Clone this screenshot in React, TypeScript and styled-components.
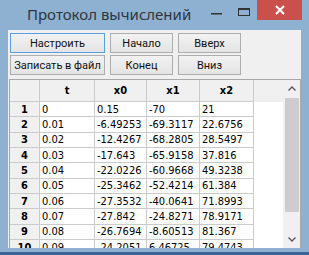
import React from "react";
import styled, { createGlobalStyle } from "styled-components";

const GlobalStyle = createGlobalStyle`
  html, body { margin: 0; padding: 0; }
  body { width: 309px; height: 255px; overflow: hidden; background: #8eb1d1; }
`;

const Window = styled.div`
  width: 309px;
  height: 255px;
  display: flex;
  flex-direction: column;
  background: #8eb1d1;
  overflow: hidden;
`;

const TitleBar = styled.div`
  height: 30px;
  flex: none;
  display: flex;
  align-items: flex-start;
`;

const Title = styled.div`
  padding: 4px 0 0 27px;
  font-family: "Noto Sans", "Open Sans", sans-serif;
  font-size: 15px;
  line-height: 20px;
  color: #2c3540;
  white-space: nowrap;
`;

const Controls = styled.div`
  margin-left: auto;
  margin-right: 7px;
  display: flex;
`;

const CaptionButton = styled.div<{ $w: number; $close?: boolean }>`
  width: ${(p) => p.$w}px;
  height: 20px;
  display: flex;
  align-items: center;
  justify-content: center;
  background: ${(p) => (p.$close ? "#c9504b" : "transparent")};
`;

const Client = styled.div`
  margin: 0 8px;
  flex: none;
  height: 218px;
  background: #f0f0f0;
  display: flex;
  flex-direction: column;
  padding: 3px 0 0 2px;
  box-sizing: border-box;
`;

const ButtonGrid = styled.div`
  display: grid;
  grid-template-columns: 95px 63px 63px;
  grid-auto-rows: 20px;
  column-gap: 5px;
  row-gap: 2px;
`;

const Button = styled.button<{ $focused?: boolean }>`
  box-sizing: border-box;
  margin: 0;
  padding: 0;
  border: 1px solid ${(p) => (p.$focused ? "#5b9fe2" : "#adadad")};
  background: linear-gradient(#f2f2f2, #e4e4e4);
  font-family: Roboto, "Noto Sans", sans-serif;
  font-size: 11px;
  color: #111;
  white-space: nowrap;
`;

const Grid = styled.div`
  margin: 4px 0 0 -1px;
  flex: 1;
  min-height: 0;
  border: 1px solid #a8a8a8;
  border-bottom: none;
  display: flex;
  background: #fff;
  overflow: hidden;
`;

const Cells = styled.div`
  flex: 1;
  display: flex;
  flex-direction: column;
`;

const COLS = "30px 55px 52px 53px 54px 1fr";

const HeaderRow = styled.div`
  display: grid;
  grid-template-columns: ${COLS};
  height: 22px;
  flex: none;
  background: #f0f0f0;
`;

const DataRow = styled.div`
  display: grid;
  grid-template-columns: ${COLS};
  height: 15.33px;
  flex: none;
`;

const Cell = styled.div<{ $fixed?: boolean; $filler?: boolean }>`
  box-sizing: border-box;
  border-right: ${(p) => (p.$filler ? "none" : "1px solid #cbcbcb")};
  border-bottom: ${(p) => (p.$filler ? "none" : "1px solid #cbcbcb")};
  background: ${(p) => (p.$fixed ? "#f0f0f0" : "transparent")};
  display: flex;
  align-items: center;
  justify-content: ${(p) => (p.$fixed ? "center" : "flex-start")};
  padding-left: ${(p) => (p.$fixed ? "0" : "2px")};
  font-family: "DejaVu Sans Condensed", "DejaVu Sans", sans-serif;
  font-stretch: condensed;
  font-size: 11px;
  font-weight: ${(p) => (p.$fixed ? "bold" : "normal")};
  color: #000;
  white-space: nowrap;
  overflow: hidden;
`;

const ScrollBar = styled.div`
  width: 17px;
  flex: none;
  background: #f0f0f0;
  display: flex;
  flex-direction: column;
  align-items: center;
`;

const ArrowBox = styled.div`
  width: 17px;
  height: 17px;
  flex: none;
  display: flex;
  align-items: center;
  justify-content: center;
`;

const Thumb = styled.div`
  margin-top: 1px;
  width: 14px;
  height: 114px;
  background: #cdcdcd;
`;

const Spacer = styled.div`
  flex: 1;
`;

const BottomStrip = styled.div`
  margin-top: 4px;
  flex: 1;
  background: #3b6592;
`;

const headers = ["t", "x0", "x1", "x2"];
const rows: string[][] = [
  ["0", "0.15", "-70", "21"],
  ["0.01", "-6.49253", "-69.3117", "22.6756"],
  ["0.02", "-12.4267", "-68.2805", "28.5497"],
  ["0.03", "-17.643", "-65.9158", "37.816"],
  ["0.04", "-22.0226", "-60.9668", "49.3238"],
  ["0.05", "-25.3462", "-52.4214", "61.384"],
  ["0.06", "-27.3532", "-40.0641", "71.8993"],
  ["0.07", "-27.842", "-24.8271", "78.9171"],
  ["0.08", "-26.7694", "-8.60513", "81.367"],
  ["0.09", "-24.2051", "6.46725", "79.4743"],
];

export default function App() {
  return (
    <>
      <GlobalStyle />
      <Window>
        <TitleBar>
          <Title>Протокол вычислений</Title>
          <Controls>
            <CaptionButton $w={27}>
              <svg width="11" height="20" viewBox="0 0 11 20">
                <rect x="0" y="13" width="11" height="1.5" fill="#333" />
              </svg>
            </CaptionButton>
            <CaptionButton $w={27}>
              <svg width="12" height="20" viewBox="0 0 12 20">
                <rect x="0.5" y="8.5" width="11" height="7" fill="none" stroke="#333" strokeWidth="1" />
                <rect x="0.5" y="8" width="11" height="2" fill="#333" />
              </svg>
            </CaptionButton>
            <CaptionButton $w={45} $close>
              <svg width="10" height="10" viewBox="0 0 10 10">
                <path d="M1 1 L9 9 M9 1 L1 9" stroke="#fff" strokeWidth="2" />
              </svg>
            </CaptionButton>
          </Controls>
        </TitleBar>
        <Client>
          <ButtonGrid>
            <Button $focused>Настроить</Button>
            <Button>Начало</Button>
            <Button>Вверх</Button>
            <Button>Записать в файл</Button>
            <Button>Конец</Button>
            <Button>Вниз</Button>
          </ButtonGrid>
          <Grid>
            <Cells>
              <HeaderRow>
                <Cell $fixed />
                {headers.map((h) => (
                  <Cell $fixed key={h}>{h}</Cell>
                ))}
                <Cell $filler />
              </HeaderRow>
              {rows.map((r, i) => (
                <DataRow key={i}>
                  <Cell $fixed>{i + 1}</Cell>
                  {r.map((v, j) => (
                    <Cell key={j}>{v}</Cell>
                  ))}
                  <Cell $filler />
                </DataRow>
              ))}
            </Cells>
            <ScrollBar>
              <ArrowBox>
                <svg width="8" height="5" viewBox="0 0 8 5">
                  <path d="M0.5 4.5 L4 1 L7.5 4.5" fill="none" stroke="#555" strokeWidth="1.3" />
                </svg>
              </ArrowBox>
              <Thumb />
              <Spacer />
              <ArrowBox>
                <svg width="8" height="5" viewBox="0 0 8 5">
                  <path d="M0.5 0.5 L4 4 L7.5 0.5" fill="none" stroke="#555" strokeWidth="1.3" />
                </svg>
              </ArrowBox>
            </ScrollBar>
          </Grid>
        </Client>
        <BottomStrip />
      </Window>
    </>
  );
}
